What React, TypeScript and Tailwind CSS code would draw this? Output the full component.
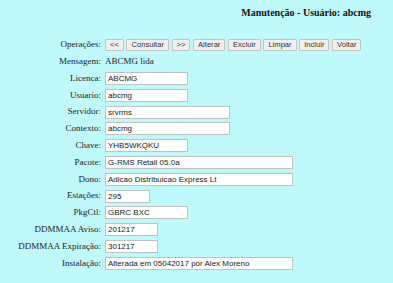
import React from 'react';

interface Field {
  label: string;
  value: string;
  width: string;
}

const fields: Field[] = [
  { label: 'Licenca:', value: 'ABCMG', width: 'w-[83px]' },
  { label: 'Usuario:', value: 'abcmg', width: 'w-[83px]' },
  { label: 'Servidor:', value: 'srvrms', width: 'w-[125px]' },
  { label: 'Contexto:', value: 'abcmg', width: 'w-[125px]' },
  { label: 'Chave:', value: 'YHB5WKQKU', width: 'w-[83px]' },
  { label: 'Pacote:', value: 'G-RMS Retail 05.0a', width: 'w-[188px]' },
  { label: 'Dono:', value: 'Adicao Distribuicao Express Lt', width: 'w-[188px]' },
  { label: 'Estações:', value: '295', width: 'w-[45px]' },
  { label: 'PkgCtl:', value: 'GBRC BXC', width: 'w-[83px]' },
  { label: 'DDMMAA Aviso:', value: '201217', width: 'w-[53px]' },
  { label: 'DDMMAA Expiração:', value: '301217', width: 'w-[53px]' },
  { label: 'Instalação:', value: 'Alterada em 05042017 por Alex Moreno', width: 'w-[188px]' },
];

const ops = ['<<', 'Consultar', '>>', 'Alterar', 'Excluir', 'Limpar', 'Incluir', 'Voltar'];

const serif = "font-['Liberation_Serif',serif]";
const sans = "font-['Liberation_Sans',Arial,sans-serif]";

const Label: React.FC<{ children: React.ReactNode }> = ({ children }) => (
  <div className={`${serif} text-[9px] text-[#222] text-right whitespace-nowrap`}>{children}</div>
);

const App: React.FC = () => {
  return (
    <div className="w-[393px] h-[283px] bg-[#c0f9fc] overflow-hidden">
      <div className="flex justify-end pr-[22px] pt-[7px] h-[36.5px]">
        <h1 className={`${serif} text-[10px] font-bold text-[#111] leading-[12px]`}>
          Manutenção - Usuário: abcmg
        </h1>
      </div>

      <div className="grid grid-cols-[101px_1fr] gap-x-[4px] auto-rows-[16.8px] items-center">
        <Label>Operações:</Label>
        <div className="flex gap-[2.6px]">
          {ops.map((op) => (
            <button
              key={op}
              className={`${sans} h-[11.5px] px-[4px] text-[7.6px] leading-[9px] text-[#333] bg-[#efefef] border border-[#c4c4c4] rounded-[1px]`}
            >
              {op}
            </button>
          ))}
        </div>

        <Label>Mensagem:</Label>
        <div className={`${serif} text-[9px] text-[#222]`}>ABCMG lida</div>

        {fields.map((f) => (
          <React.Fragment key={f.label}>
            <Label>{f.label}</Label>
            <input
              readOnly
              value={f.value}
              className={`${sans} ${f.width} h-[13px] px-[2px] text-[8px] text-[#222] bg-white border border-[#c2c2c2] outline-none`}
            />
          </React.Fragment>
        ))}
      </div>
    </div>
  );
};

export default App;
